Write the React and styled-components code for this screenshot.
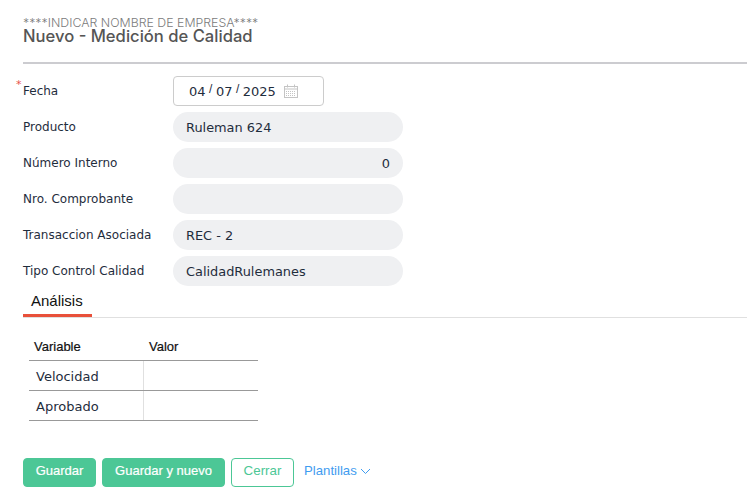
import styled, { createGlobalStyle } from "styled-components";

const GlobalStyle = createGlobalStyle`
  html, body {
    margin: 0;
    padding: 0;
    background: #fff;
  }
`;

const Page = styled.div`
  width: 747px;
  height: 495px;
  overflow: hidden;
  box-sizing: border-box;
  padding: 16px 0 0 23px;
  font-family: "DejaVu Sans", Verdana, sans-serif;
  color: #1f2a3a;
`;

const Header = styled.div`
  height: 46px;
  border-bottom: 2px solid #ccccd0;
  margin-bottom: 12px;
`;

const Company = styled.div`
  font-family: "Inter", "Open Sans", sans-serif;
  font-size: 12.35px;
  line-height: 13px;
  color: #7b7b7b;
  font-weight: 300;
`;

const Title = styled.h1`
  margin: 0;
  font-family: "Inter", "Open Sans", sans-serif;
  font-size: 16.6px;
  line-height: 15px;
  font-weight: 500;
  color: #555;
`;

const Form = styled.div`
  display: flex;
  flex-direction: column;
  gap: 6px;
`;

const Row = styled.div`
  display: flex;
  align-items: flex-start;
  height: 30px;
`;

const Label = styled.label`
  position: relative;
  width: 150px;
  font-size: 12px;
  line-height: 16px;
  padding-top: 7px;
  color: #1f2d3d;
`;

const Required = styled.span`
  position: absolute;
  left: -7px;
  top: 3px;
  color: #e8504a;
  font-size: 11px;
  line-height: 12px;
`;

const DateBox = styled.div`
  width: 151px;
  height: 30px;
  box-sizing: border-box;
  border: 1px solid #ccc;
  border-radius: 4px;
  display: flex;
  align-items: center;
  padding-left: 15px;
  font-size: 13px;
  color: #1f2d3d;
`;

const DatePart = styled.span``;

const DateSep = styled.span`
  font-family: "Liberation Sans", Arial, sans-serif;
  font-size: 12px;
  margin: -5px 3.5px 0;
`;

const CalendarIcon = styled.svg`
  width: 14px;
  height: 14px;
  margin-left: 8px;
`;

const Field = styled.div`
  width: 230px;
  height: 30px;
  box-sizing: border-box;
  border-radius: 15px;
  background: #eff0f2;
  padding: 0 13px;
  font-size: 12.9px;
  line-height: 31px;
  color: #1f2d3d;
  text-align: ${(p) => (p.$right ? "right" : "left")};
`;

const Tabs = styled.div`
  display: flex;
  height: 31px;
  border-bottom: 1px solid #e0e0e0;
`;

const Tab = styled.div`
  width: 69px;
  box-sizing: border-box;
  height: 31px;
  padding-left: 8px;
  font-family: "Liberation Sans", Arial, sans-serif;
  font-size: 15px;
  line-height: 30px;
  color: #111;
  border-bottom: 3px solid #e8503a;
`;

const AnalysisTable = styled.table`
  border-collapse: collapse;
  width: 229px;
  margin: 21px 0 0 6px;
  table-layout: fixed;
`;

const Th = styled.th`
  font-family: "Liberation Sans", Arial, sans-serif;
  font-size: 13px;
  font-weight: 400;
  color: #111;
  text-align: left;
  height: 14px;
  line-height: 14px;
  padding: 1px 0 6px 5px;
  border-bottom: 1px solid #999;
  -webkit-text-stroke: 0.2px #111;
  & + & {
    padding-left: 6px;
  }
`;

const Td = styled.td`
  height: 30px;
  padding: 2px 0 0 7px;
  box-sizing: border-box;
  font-size: 13px;
  color: #1f2d3d;
  border-bottom: 1px solid #999;
  & + & {
    border-left: 1px solid #e0e0e0;
  }
`;

const Actions = styled.div`
  display: flex;
  align-items: center;
  gap: 6px;
  margin-top: 37px;
`;

const Button = styled.button`
  height: 29px;
  box-sizing: border-box;
  width: ${(p) => p.$w}px;
  padding: 0 0 4px;
  border-radius: 4px;
  border: 1px solid #4cc796;
  background: ${(p) => (p.$outline ? "#fff" : "#4cc796")};
  color: ${(p) => (p.$outline ? "#4cc796" : "#fff")};
  font-family: "Liberation Sans", Arial, sans-serif;
  font-size: ${(p) => (p.$outline ? "13.33px" : "13px")};
  -webkit-text-stroke: ${(p) => (p.$outline ? "0" : "0.2px #fff")};
`;

const TemplatesLink = styled.a`
  margin-left: 4px;
  display: flex;
  align-items: center;
  gap: 3px;
  padding-bottom: 4px;
  font-family: "Liberation Sans", Arial, sans-serif;
  font-size: 13.2px;
  color: #3f9cf0;
`;

export default function App() {
  return (
    <Page>
      <GlobalStyle />
      <Header>
        <Company>****INDICAR NOMBRE DE EMPRESA****</Company>
        <Title>Nuevo - Medición de Calidad</Title>
      </Header>
      <Form>
        <Row>
          <Label>
            <Required>*</Required>
            Fecha
          </Label>
          <DateBox>
            <DatePart>04</DatePart>
            <DateSep>/</DateSep>
            <DatePart>07</DatePart>
            <DateSep>/</DateSep>
            <DatePart>2025</DatePart>
            <CalendarIcon viewBox="0 0 14 14" fill="none" stroke="#c4c4c4">
              <rect x="0.5" y="2.5" width="13" height="11" />
              <path d="M0.5 5h13M3.5 0.5v3M10.5 0.5v3" />
              <path d="M2 7.5h10M2 9.5h10M2 11.5h10" strokeDasharray="1 1" />
            </CalendarIcon>
          </DateBox>
        </Row>
        <Row>
          <Label>Producto</Label>
          <Field>Ruleman 624</Field>
        </Row>
        <Row>
          <Label>Número Interno</Label>
          <Field $right>0</Field>
        </Row>
        <Row>
          <Label>Nro. Comprobante</Label>
          <Field />
        </Row>
        <Row>
          <Label>Transaccion Asociada</Label>
          <Field>REC - 2</Field>
        </Row>
        <Row>
          <Label>Tipo Control Calidad</Label>
          <Field>CalidadRulemanes</Field>
        </Row>
      </Form>
      <Tabs>
        <Tab>Análisis</Tab>
      </Tabs>
      <AnalysisTable>
        <colgroup>
          <col width="114" />
          <col width="115" />
        </colgroup>
        <thead>
          <tr>
            <Th>Variable</Th>
            <Th>Valor</Th>
          </tr>
        </thead>
        <tbody>
          <tr>
            <Td>Velocidad</Td>
            <Td />
          </tr>
          <tr>
            <Td>Aprobado</Td>
            <Td />
          </tr>
        </tbody>
      </AnalysisTable>
      <Actions>
        <Button $w={73}>Guardar</Button>
        <Button $w={123}>Guardar y nuevo</Button>
        <Button $w={63} $outline>
          Cerrar
        </Button>
        <TemplatesLink>
          Plantillas
          <svg width="11" height="6" viewBox="0 0 11 6" fill="none" stroke="#3f9cf0">
            <path d="M1 1l4.5 4.5L10 1" />
          </svg>
        </TemplatesLink>
      </Actions>
    </Page>
  );
}
